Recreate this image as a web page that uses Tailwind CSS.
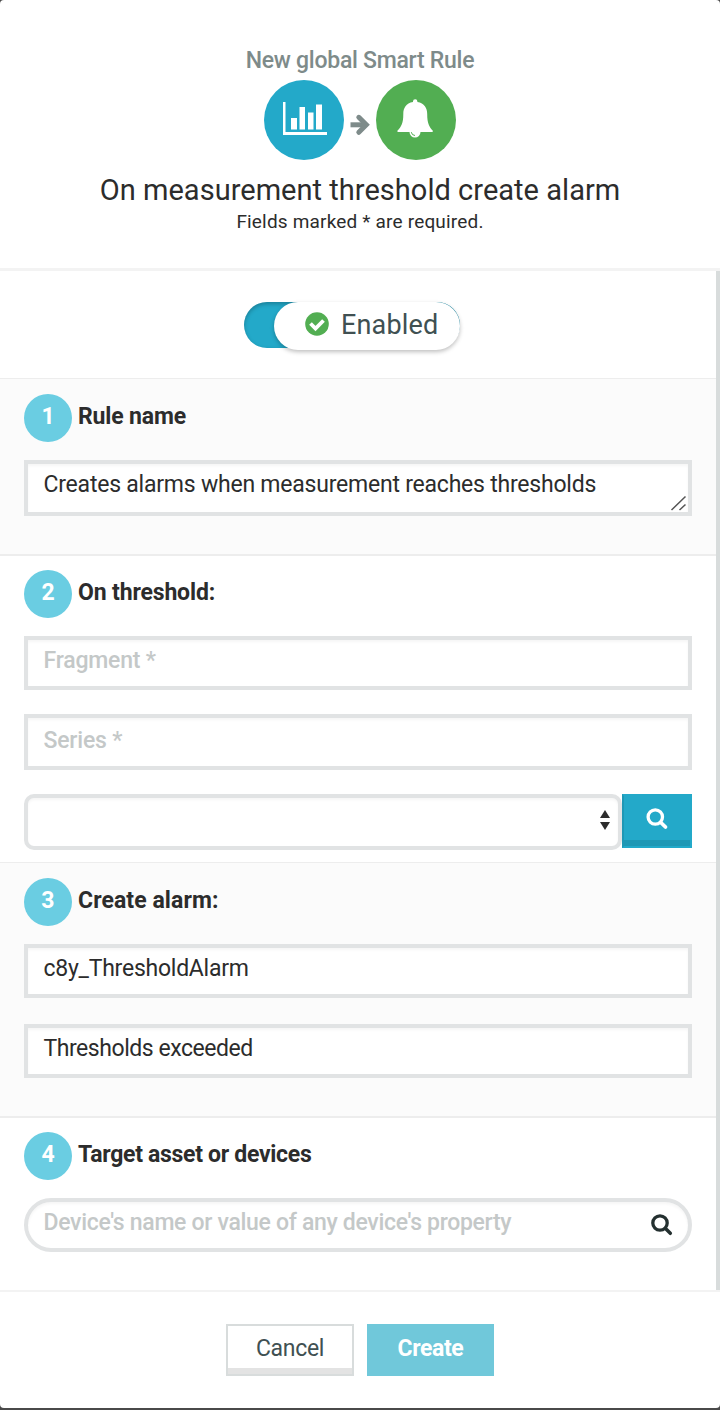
<!DOCTYPE html>
<html lang="en">
<head>
<meta charset="utf-8">
<title>New global Smart Rule</title>
<script src="https://cdn.jsdelivr.net/npm/@tailwindcss/browser@4"></script>
</head>
<body class="bg-[#4a4a4a]">
<div class="flex h-[1408px] w-[720px] flex-col rounded bg-white font-['Roboto',sans-serif] text-[23px] text-[#2c2c2c]">
  <header class="flex h-[271px] shrink-0 flex-col items-center border-b-3 border-[#f3f3f3] pt-10">
    <p class="h-10 font-medium leading-[42px] tracking-[-0.27px] text-[#7e8b8a]">New global Smart Rule</p>
    <div class="flex h-20 items-center">
      <span class="flex size-20 items-center justify-center rounded-full bg-[#23a9c9]">
        <svg class="size-20" viewBox="0 0 80 80" fill="#fff"><path d="M19 22h2.500v30h41.500v3H19zM27 38h6v11.500h-6zM35.500 27h5.500v22.500h-5.500zM44 32.500h5.500v17H44zM52 24.500h6v25h-6z"/></svg>
      </span>
      <svg class="h-20 w-8" viewBox="0 0 32 80" fill="none" stroke="#7e8b8a" stroke-width="5"><path d="M6.500 44.800H22"/><path d="M14.800 37.300l7.500 7.500-7.500 7.500" stroke-linecap="round"/></svg>
      <span class="flex size-20 items-center justify-center rounded-full bg-[#52ae52]">
        <svg class="size-20" viewBox="0 0 80 80" fill="#fff"><path d="M37 21.500a2.200 2.200 0 0 1 4.400 0v.5c7 1.200 9.800 6 9.800 12 0 9 2 13 5.500 16.500v1.500H21.500v-1.500c3.800-3.500 5.800-7.500 5.800-16.500 0-6 2.700-10.800 9.700-12z"/><path d="M33.500 52h11a5.500 5.500 0 0 1-11 0z"/><path d="M35.300 52.200a4 4 0 0 0 3.700 3.300" fill="none" stroke="#52ae52" stroke-width="1"/></svg>
      </span>
    </div>
    <h1 class="h-10 pt-[10px] text-[29px] leading-10 tracking-[0.03px]">On measurement threshold create alarm</h1>
    <p class="pt-[8px] text-[19px] leading-7 tracking-[0.18px]">Fields marked * are required.</p>
  </header>
  <main class="h-[1019px] shrink-0 border-r-4 border-[#d8dcdc]">
    <section class="flex h-[107px] justify-center pt-[31px] pr-[12px]">
      <div class="h-[46px] w-[216px] rounded-full bg-[#23a9c9] pl-[30px] shadow-[inset_0_2px_4px_rgba(0,0,0,.25)]">
        <div class="flex h-12 w-[186px] items-center rounded-full bg-white pl-[31px] text-[27px] text-[#405052] shadow-[0_2px_4px_rgba(0,0,0,.25)]">
          <svg class="mb-1 size-6" viewBox="0 0 24 24"><circle cx="12" cy="12" r="11.800" fill="#52ae52"/><path d="M5.500 11.500l5 5 8-8" fill="none" stroke="#fff" stroke-width="3.800"/></svg>
          <span class="ml-3 pb-0.5 leading-[46px] tracking-[0.15px]">Enabled</span>
        </div>
      </div>
    </section>
    <section class="h-[176px] border-t border-[#ededed] bg-[#fbfbfb] px-6 pt-[15px]">
      <h2 class="flex gap-1.5 font-bold leading-[46px] tracking-[-0.15px]"><span class="size-12 rounded-full bg-[#6acde2] text-center text-white">1</span>Rule name</h2>
      <div class="relative mt-[18px] h-14 border-4 border-[#e1e3e4] bg-white pl-[15.5px] leading-[42px] tracking-[-0.22px] shadow-[inset_0_2px_3px_rgba(0,0,0,.04)]">Creates alarms when measurement reaches thresholds
        <svg class="absolute right-0 bottom-0 size-5" viewBox="0 0 20 20" fill="none" stroke="#555" stroke-width="1.500"><path d="M3.500 18L17.500 4.500M11.500 18l6-5.500"/></svg>
      </div>
    </section>
    <section class="h-[308px] border-t-2 border-[#ededed] px-6 pt-[14px]">
      <h2 class="flex gap-1.5 font-bold leading-[46px] tracking-[-0.15px]"><span class="size-12 rounded-full bg-[#6acde2] text-center text-white">2</span>On threshold:</h2>
      <div class="mt-[18px] h-[54px] border-4 border-[#e1e3e4] bg-white pl-[15.5px] font-medium leading-[42px] tracking-[-0.2px] text-[#c4c8c8] shadow-[inset_0_2px_3px_rgba(0,0,0,.04)]">Fragment *</div>
      <div class="mt-6 h-14 border-4 border-[#e1e3e4] bg-white pl-[15.5px] font-medium leading-[46px] tracking-[-0.2px] text-[#c4c8c8] shadow-[inset_0_2px_3px_rgba(0,0,0,.04)]">Series *</div>
      <div class="mt-6 flex">
        <div class="flex h-14 w-[598px] justify-end rounded-[10px] border-4 border-[#e1e3e4] bg-white pt-3 pr-2 shadow-[inset_0_2px_3px_rgba(0,0,0,.04)]">
          <svg class="h-5 w-[10px]" viewBox="0 0 10 20" fill="#2c2c2c"><path d="M0 8L5 0l5 8zM0 12h10l-5 8z"/></svg>
        </div>
        <div class="h-[54px] w-[70px] border-2 border-[#23a9c9] border-l-[#1f98b5] bg-[#23a9c9] shadow-[inset_0_-6px_0_#1f98b5]">
          <svg class="mt-3 ml-[22px] size-6" viewBox="0 0 24 24" fill="none" stroke="#fff"><circle cx="9.300" cy="9" r="7.200" stroke-width="3.300"/><path d="M14.800 14.500l4.700 4.500" stroke-width="3.800" stroke-linecap="round"/></svg>
        </div>
      </div>
    </section>
    <section class="h-[254px] border-t border-[#ededed] bg-[#fbfbfb] px-6 pt-[15px]">
      <h2 class="flex gap-1.5 font-bold leading-[46px] tracking-[0.08px]"><span class="size-12 rounded-full bg-[#6acde2] text-center text-white">3</span>Create alarm:</h2>
      <div class="mt-[18px] h-[54px] border-4 border-[#e1e3e4] bg-white pl-[15.5px] leading-[42px] tracking-[-0.25px] shadow-[inset_0_2px_3px_rgba(0,0,0,.04)]">c8y_ThresholdAlarm</div>
      <div class="mt-[26px] h-[54px] border-4 border-[#e1e3e4] bg-white pl-[15.5px] leading-[42px] tracking-[-0.45px] shadow-[inset_0_2px_3px_rgba(0,0,0,.04)]">Thresholds exceeded</div>
    </section>
    <section class="h-[174px] border-t-2 border-[#ededed] px-6 pt-[14px]">
      <h2 class="flex gap-1.5 font-bold leading-[46px] tracking-[-0.3px]"><span class="size-12 rounded-full bg-[#6acde2] text-center text-white">4</span>Target asset or devices</h2>
      <div class="mt-[18px] flex h-[54px] justify-between rounded-full border-4 border-[#e1e3e4] bg-white pr-[14px] pl-[15.5px] font-medium leading-[42px] tracking-[-0.31px] text-[#c4c8c8] shadow-[inset_0_2px_3px_rgba(0,0,0,.04)]">Device's name or value of any device's property
        <svg class="mt-3 size-6" viewBox="0 0 24 24" fill="none" stroke="#243030"><circle cx="10" cy="9" r="7.200" stroke-width="3.300"/><path d="M15.500 14.500l4.800 4.800" stroke-width="3.500" stroke-linecap="round"/></svg>
      </div>
    </section>
  </main>
  <footer class="flex grow justify-center gap-[13px] border-t-2 border-[#f3f3f3] pt-8">
    <div class="h-[52px] w-32 border-2 border-[#d8dcdc] text-center leading-[46px] tracking-[-0.3px] text-[#405052] shadow-[inset_0_-6px_0_#e3e3e3]">Cancel</div>
    <div class="h-[52px] w-[127px] bg-[#70c8da] text-center font-bold leading-[50px] tracking-[-0.4px] text-white">Create</div>
  </footer>
</div>
</body>
</html>
